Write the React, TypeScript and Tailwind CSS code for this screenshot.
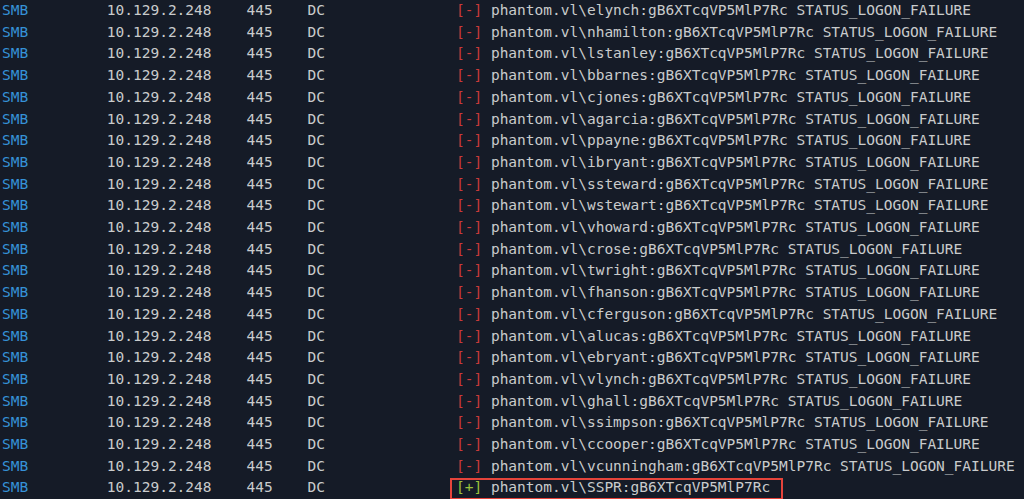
const users = [
  "elynch",
  "nhamilton",
  "lstanley",
  "bbarnes",
  "cjones",
  "agarcia",
  "ppayne",
  "ibryant",
  "ssteward",
  "wstewart",
  "vhoward",
  "crose",
  "twright",
  "fhanson",
  "cferguson",
  "alucas",
  "ebryant",
  "vlynch",
  "ghall",
  "ssimpson",
  "ccooper",
  "vcunningham",
];

const pass = "gB6XTcqVP5MlP7Rc";

const Prefix = () => (
  <>
    <span className="text-[#3592d8]">SMB</span>
    {"         10.129.2.248    445    DC               "}
  </>
);

const App = () => {
  return (
    <section className="w-[1024px] h-[499px] overflow-hidden bg-[#151b27]">
      <div
        className="pl-[2px] text-[14.5px] leading-[21.7px] text-[#c9cbcc] whitespace-pre"
        style={{ fontFamily: '"DejaVu Sans Mono", "Liberation Mono", monospace' }}
      >
        {users.map((u) => (
          <div key={u}>
            <Prefix />
            <span className="text-[#c93a3a]">[-]</span>
            {` phantom.vl\\${u}:${pass} STATUS_LOGON_FAILURE`}
          </div>
        ))}
        <div>
          <Prefix />
          <span className="relative">
            <span className="absolute left-[-6px] right-[-13px] top-[-1px] h-[22px] border-2 border-[#e5443b]" />
            <span className="text-[#9ac33c]">[+]</span>
            {` phantom.vl\\SSPR:${pass}`}
          </span>
        </div>
      </div>
    </section>
  );
};

export default App;
